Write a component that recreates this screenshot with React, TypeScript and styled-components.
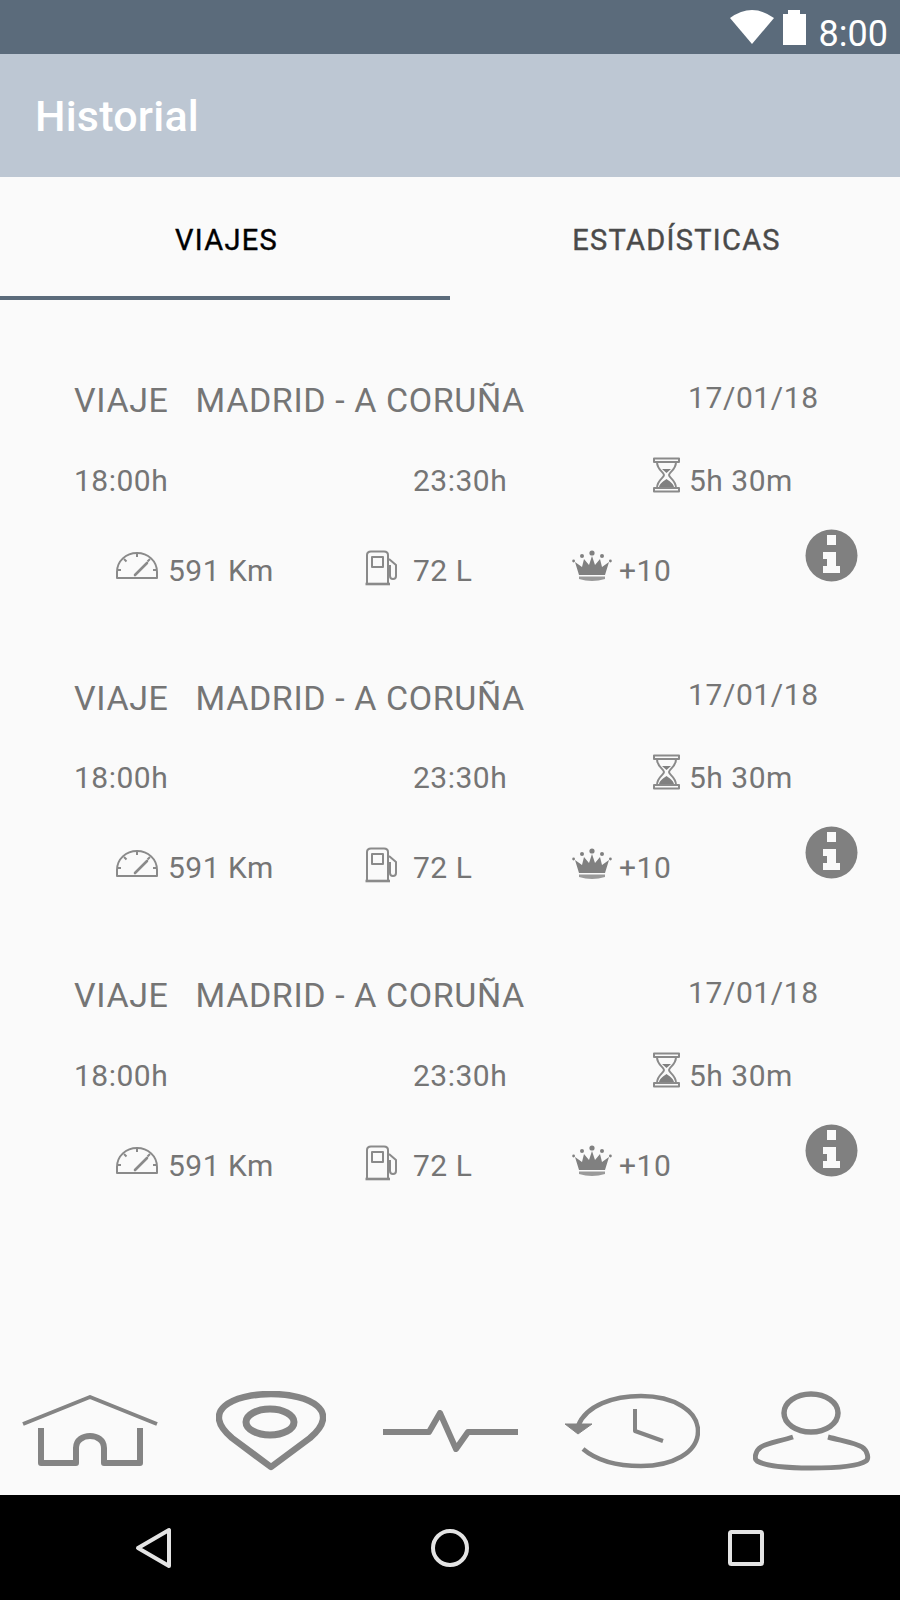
import React from 'react';
import styled, { createGlobalStyle } from 'styled-components';

const GlobalStyle = createGlobalStyle`
  html, body {
    margin: 0;
    padding: 0;
    background: #fafafa;
    font-family: Roboto, 'Liberation Sans', sans-serif;
  }
  * { box-sizing: border-box; }
`;

const trips = [1, 2, 3];

const App: React.FC = () => {
  return (
    <React.Fragment>
      <GlobalStyle />
      <Page>
        <StatusBar>
          <svg width='44' height='34' viewBox='0 0 44 34'>
            <path d='M0 8 Q22 -8 44 8 L22 34 Z' fill='#fff' />
          </svg>
          <svg width='23' height='35' viewBox='0 0 23 35'>
            <path d='M5 0 H17 V4 H23 V35 H0 V4 H5 Z' fill='#fff' />
          </svg>
          <Clock>8:00</Clock>
        </StatusBar>

        <Toolbar>Historial</Toolbar>

        <Tabs>
          <Tab $active>VIAJES</Tab>
          <Tab>ESTADÍSTICAS</Tab>
        </Tabs>

        <TripList>
          {trips.map(id => (
            <Trip key={id}>
              <TitleRow>
                <Title>VIAJE   MADRID - A CORUÑA</Title>
                <TripDate>17/01/18</TripDate>
              </TitleRow>

              <TimeRow>
                <Value>18:00h</Value>
                <Value>23:30h</Value>
                <Stat $gap={9} $lift={11}>
                  <HourglassIcon />
                  <Value>5h 30m</Value>
                </Stat>
              </TimeRow>

              <StatsRow>
                <Stat $gap={9} $lift={8}>
                  <GaugeIcon />
                  <Value>591 Km</Value>
                </Stat>
                <Stat $gap={15} $lift={5}>
                  <PumpIcon />
                  <Value>72 L</Value>
                </Stat>
                <Stat $gap={7} $lift={8}>
                  <CrownIcon />
                  <Value>+10</Value>
                </Stat>
                <InfoButton>
                  <InfoIcon />
                </InfoButton>
              </StatsRow>
            </Trip>
          ))}
        </TripList>

        <BottomNav>
          <NavIcon $left={22} width='136' height='72' viewBox='0 0 136 72'>
            <path d='M1 29 L68 2 L135 29' strokeWidth='4' />
            <path d='M19 33 V68 H54 V53 C54 37 82 37 82 53 V68 H118 V33' strokeWidth='6' />
          </NavIcon>
          <NavIcon $left={58} width='110' height='80' viewBox='0 0 110 80'>
            <path d='M55 76 L16 47 C-16 20 16 3 55 3 C94 3 126 20 94 47 Z' strokeWidth='6.5' />
            <ellipse cx='54' cy='31' rx='24' ry='13' strokeWidth='7' />
          </NavIcon>
          <NavIcon $left={57} width='135' height='46' viewBox='0 0 135 46'>
            <path d='M0 24 H46 L57 5 L73 41 L85 24 H135' strokeWidth='6' />
          </NavIcon>
          <NavIcon $left={46} width='136' height='76' viewBox='0 0 136 76'>
            <path d='M14 33 C22 12 50 3 77 3 C110 3 134 18 134 38 C134 60 108 73 77 73 C52 73 32 67 19 56' strokeWidth='4.5' />
            <path d='M1 31 H28 L14 41 Z' fill='#848484' strokeWidth='1' />
            <path d='M71 16 V38 L99 48' strokeWidth='4' />
          </NavIcon>
          <NavIcon $left={53} width='118' height='80' viewBox='0 0 118 80'>
            <ellipse cx='58' cy='22' rx='27' ry='19' strokeWidth='5.5' />
            <path d='M40 46 C28 50 14 52 8 56 C2 60 1 68 4 70 C14 76 36 77 58 77 C80 77 104 76 113 70 C116 68 115 60 109 56 C103 52 90 50 75 46' strokeWidth='5' />
          </NavIcon>
        </BottomNav>

        <SystemBar>
          <svg width='38' height='42' viewBox='0 0 38 42'>
            <path d='M34 3 V39 L3 21 Z' />
          </svg>
          <svg width='38' height='38' viewBox='0 0 38 38'>
            <circle cx='19' cy='19' r='17' />
          </svg>
          <svg width='36' height='36' viewBox='0 0 36 36'>
            <rect x='2' y='2' width='32' height='32' rx='1.5' />
          </svg>
        </SystemBar>
      </Page>
    </React.Fragment>
  );
};

export default App;

const GaugeIcon = () => (
  <IconSvg width='44' height='30' viewBox='0 0 44 30'>
    <path d='M2 27 V21 C2 10 11 2 22 2 C33 2 42 10 42 21 V27 Z' />
    <path d='M22 2 V6 M9 8 L11.5 10.5 M35 8 L32.5 10.5 M2.5 19 H6 M41.5 19 H38' />
    <path d='M20 24 L32 12' strokeWidth='2.6' strokeLinecap='round' />
  </IconSvg>
);

const PumpIcon = () => (
  <IconSvg width='34' height='36' viewBox='0 0 34 36'>
    <path d='M3 33 V5 Q3 1.5 7 1.5 H20 Q24 1.5 24 5 V33' />
    <rect x='8' y='7' width='11' height='10' />
    <path d='M1.5 34 H26' strokeWidth='2.6' />
    <path d='M25 9 L32 15 V26 Q32 29 29 29 Q26 29 26 26 V15' />
  </IconSvg>
);

const HourglassIcon = () => (
  <IconSvg width='27' height='36' viewBox='0 0 27 36'>
    <path d='M1 1.5 H26 V5 H1 Z M1 31 H26 V34.5 H1 Z' />
    <path d='M4 5 C4 13 11 15 11 18 C11 21 4 23 4 31 M23 5 C23 13 16 15 16 18 C16 21 23 23 23 31' />
    <path d='M9 12 H18 L13.5 16 Z M6 30 C7 26 11 24 13.5 22 C16 24 20 26 21 30 Z' fill='#808080' stroke='none' />
  </IconSvg>
);

const CrownIcon = () => (
  <IconSvg width='40' height='32' viewBox='0 0 40 32'>
    <g fill='#808080' stroke='none'>
      <path d='M7 25 L3 12 L10 17 L12 9 L17 15 L20 6 L23 15 L28 9 L30 17 L37 12 L33 25 Z' />
      <path d='M7 26.5 H33 V29 Q20 33 7 29 Z' fill='#9a9a9a' />
      <circle cx='20' cy='3' r='2.6' />
      <circle cx='10' cy='6' r='2' />
      <circle cx='30' cy='6' r='2' />
      <circle cx='1.6' cy='11' r='1.4' />
      <circle cx='38.4' cy='11' r='1.4' />
    </g>
  </IconSvg>
);

const InfoIcon = () => (
  <svg width='53' height='53' viewBox='0 0 53 53'>
    <circle cx='26.5' cy='26.5' r='26' fill='#808080' />
    <path d='M22 6 H31 V16 H22 Z M18 23 H31 V37 H35 V44 H18 V37 H22 V30 H18 Z' fill='#fafafa' />
  </svg>
);

const Page = styled.div`
  width: 900px;
  height: 1600px;
  display: flex;
  flex-direction: column;
  overflow: hidden;
  background: #fafafa;
`;

const StatusBar = styled.div`
  height: 54px;
  flex: none;
  display: flex;
  align-items: flex-start;
  justify-content: flex-end;
  gap: 9px;
  padding: 10px 12px 0 0;
  background: #5b6b7b;
`;

const Clock = styled.span`
  margin-left: 4px;
  margin-top: 2px;
  color: #fff;
  font-size: 36px;
  line-height: 44px;
`;

const Toolbar = styled.header`
  height: 123px;
  flex: none;
  display: flex;
  align-items: center;
  padding-left: 35px;
  background: #bdc7d3;
  color: #fff;
  font-size: 43px;
  font-weight: 500;
  letter-spacing: 0.2px;
`;

const Tabs = styled.nav`
  height: 123px;
  flex: none;
  display: flex;
`;

const Tab = styled.div<{ $active?: boolean }>`
  flex: 1;
  display: flex;
  align-items: center;
  justify-content: center;
  padding: 7px 0 0 3px;
  color: ${p => (p.$active ? '#000' : '#4a4a4a')};
  font-size: 29px;
  font-weight: 400;
  letter-spacing: 1.3px;
  -webkit-text-stroke: 0.4px currentColor;
  border-bottom: 4px solid ${p => (p.$active ? '#5b6b7b' : 'transparent')};
`;

const TripList = styled.main`
  flex: 1;
  padding-top: 80px;
  display: flex;
  flex-direction: column;
`;

const Trip = styled.article`
  height: 297.5px;
  flex: none;
  padding-left: 74px;
`;

const TitleRow = styled.div`
  height: 40px;
  display: grid;
  grid-template-columns: 615px 1fr;
  align-items: center;
`;

const Title = styled.h2`
  margin: 0;
  color: #757575;
  font-size: 34px;
  font-weight: 400;
  letter-spacing: 0.6px;
  white-space: pre;
`;

const TripDate = styled.span`
  margin-top: -6px;
  margin-left: -1px;
  color: #757575;
  font-size: 30px;
  letter-spacing: 0.6px;
`;

const TimeRow = styled.div`
  height: 40px;
  margin-top: 40px;
  display: grid;
  grid-template-columns: 339px 240px 1fr;
  align-items: center;
`;

const Value = styled.span`
  color: #757575;
  font-size: 30px;
  letter-spacing: 0.5px;
  white-space: nowrap;
`;

const Stat = styled.div<{ $gap: number; $lift: number }>`
  display: flex;
  align-items: center;
  gap: ${p => p.$gap}px;

  svg {
    flex: none;
    margin-top: -${p => p.$lift}px;
  }
`;

const StatsRow = styled.div`
  height: 40px;
  margin-top: 50px;
  margin-left: 41px;
  display: grid;
  grid-template-columns: 249px 208px 233px 1fr;
  align-items: center;
`;

const InfoButton = styled.div`
  height: 53px;
  margin-top: -30px;
`;

const IconSvg = styled.svg`
  fill: none;
  stroke: #8a8a8a;
  stroke-width: 2;
  stroke-linejoin: round;
`;

const BottomNav = styled.div`
  height: 106px;
  flex: none;
  display: flex;
  align-items: center;
  padding-bottom: 22px;
`;

const NavIcon = styled.svg<{ $left: number }>`
  flex: none;
  margin-left: ${p => p.$left}px;
  fill: none;
  stroke: #848484;
  stroke-linejoin: round;
  filter: blur(0.7px);
`;

const SystemBar = styled.footer`
  height: 105px;
  flex: none;
  display: grid;
  grid-template-columns: repeat(3, 1fr);
  justify-items: center;
  align-items: center;
  padding: 0 6px;
  background: #000;

  svg {
    fill: none;
    stroke: #e4e4e4;
    stroke-width: 4;
    stroke-linejoin: round;
  }
`;
